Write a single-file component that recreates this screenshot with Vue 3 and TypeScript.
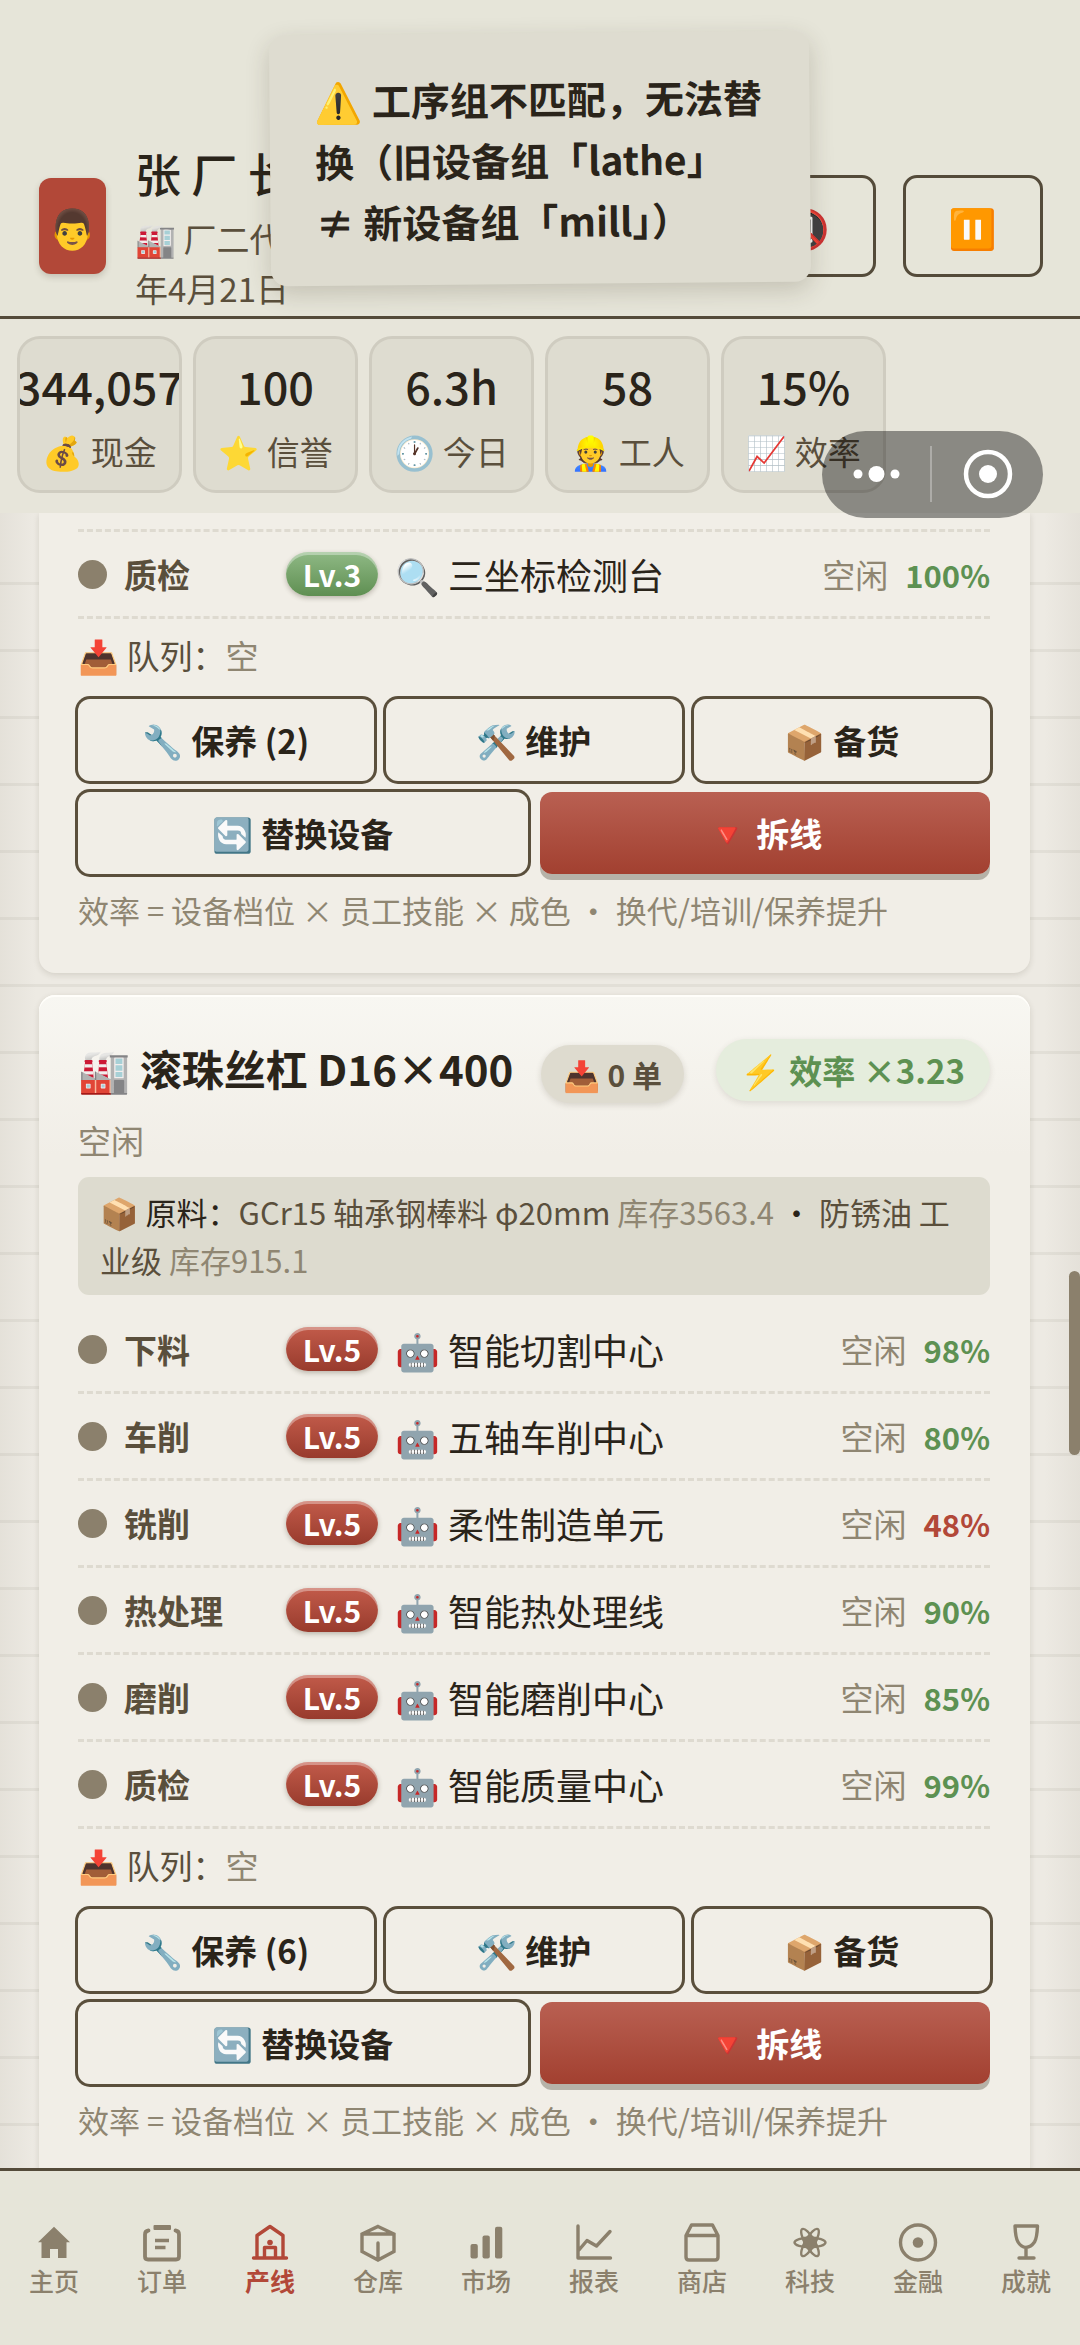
<script setup lang="ts">
interface Stat { value: string; icon: string; label: string }
interface Step { name: string; level: number; icon: string; machine: string; pct: number }
interface Material { name: string; stock: string }
interface Line {
  id: string
  partial: boolean
  title?: string
  orders?: number
  multiplier?: string
  materials?: Material[]
  steps: Step[]
  service: number
}

const stats: Stat[] = [
  { value: '344,057', icon: '💰', label: '现金' },
  { value: '100', icon: '⭐', label: '信誉' },
  { value: '6.3h', icon: '🕐', label: '今日' },
  { value: '58', icon: '👷', label: '工人' },
  { value: '15%', icon: '📈', label: '效率' },
]

const lines: Line[] = [
  {
    id: 'a',
    partial: true,
    steps: [{ name: '质检', level: 3, icon: '🔍', machine: '三坐标检测台', pct: 100 }],
    service: 2,
  },
  {
    id: 'b',
    partial: false,
    title: '滚珠丝杠 D16×400',
    orders: 0,
    multiplier: '3.23',
    materials: [
      { name: 'GCr15 轴承钢棒料 φ20mm', stock: '3563.4' },
      { name: '防锈油 工业级', stock: '915.1' },
    ],
    steps: [
      { name: '下料', level: 5, icon: '🤖', machine: '智能切割中心', pct: 98 },
      { name: '车削', level: 5, icon: '🤖', machine: '五轴车削中心', pct: 80 },
      { name: '铣削', level: 5, icon: '🤖', machine: '柔性制造单元', pct: 48 },
      { name: '热处理', level: 5, icon: '🤖', machine: '智能热处理线', pct: 90 },
      { name: '磨削', level: 5, icon: '🤖', machine: '智能磨削中心', pct: 85 },
      { name: '质检', level: 5, icon: '🤖', machine: '智能质量中心', pct: 99 },
    ],
    service: 6,
  },
]

const tabs = ['主页', '订单', '产线', '仓库', '市场', '报表', '商店', '科技', '金融', '成就']
const activeTab = '产线'
</script>

<template>
  <div class="app">
    <header class="top">
      <div class="avatar">👨</div>
      <div class="who">
        <h1 class="name">张 厂 长</h1>
        <p class="sub">🏭 厂二代<br />年4月21日</p>
      </div>
      <button class="icon-btn" type="button" aria-label="静音">📵</button>
      <button class="icon-btn" type="button" aria-label="暂停">⏸️</button>
    </header>

    <section class="stats">
      <div v-for="s in stats" :key="s.label" class="stat">
        <span class="stat-value">{{ s.value }}</span>
        <span class="stat-label">{{ s.icon }} {{ s.label }}</span>
      </div>
    </section>

    <main class="main">
      <article v-for="l in lines" :key="l.id" class="card" :class="{ partial: l.partial }">
        <template v-if="l.title">
          <div class="head">
            <h2 class="title">🏭 {{ l.title }}</h2>
            <span class="pill orders">📥 {{ l.orders }} 单</span>
            <span class="pill eff">⚡ 效率 ×{{ l.multiplier }}</span>
          </div>
          <p class="status">空闲</p>
          <p class="materials">📦 原料：<template v-for="(m, i) in l.materials" :key="m.name"><template v-if="i > 0"> · </template><span class="mat">{{ m.name }}</span> <span class="stock">库存{{ m.stock }}</span></template></p>
        </template>

        <ul class="steps">
          <li v-for="s in l.steps" :key="s.name" class="step">
            <i class="dot"></i>
            <span class="step-name">{{ s.name }}</span>
            <span class="level" :class="'lv' + s.level">Lv.{{ s.level }}</span>
            <span class="machine">{{ s.icon }} {{ s.machine }}</span>
            <span class="state">空闲</span>
            <span class="pct" :class="{ low: s.pct < 60 }">{{ s.pct }}%</span>
          </li>
        </ul>

        <p class="queue">📥 队列：<span class="muted">空</span></p>
        <div class="actions">
          <button class="btn" type="button">🔧 保养 ({{ l.service }})</button>
          <button class="btn" type="button">🛠️ 维护</button>
          <button class="btn" type="button">📦 备货</button>
        </div>
        <div class="actions">
          <button class="btn" type="button">🔄 替换设备</button>
          <button class="btn danger" type="button">🔻 拆线</button>
        </div>
        <p class="hint">效率 = 设备档位 × 员工技能 × 成色 · 换代/培训/保养提升</p>
      </article>
      <div class="scrollbar"></div>
    </main>

    <nav class="tabs">
      <a v-for="t in tabs" :key="t" href="#" class="tab" :class="{ active: t === activeTab }">
        <svg class="tab-icon" viewBox="0 0 40 40" fill="none" stroke="currentColor" stroke-width="3.4" stroke-linecap="round" stroke-linejoin="round" aria-hidden="true">
          <path v-if="t === '主页'" d="M20 3.7 36 19.3H32.5V35H24V26H16V35H7.5V19.3H4Z" fill="currentColor" stroke="none" />
          <g v-else-if="t === '订单'">
            <path d="M6.5 7.5Q3 8 3 11.5V33.5Q3 36.5 6 36.5H34Q37 36.5 37 33.5V11.5Q37 8 33.5 7.5" stroke-width="3.8" />
            <rect x="11.5" y="2" width="17.5" height="5" rx="1" fill="currentColor" stroke="none" />
            <path d="M13 17.5H27M13 24.5H23.5" stroke-linecap="butt" />
          </g>
          <g v-else-if="t === '产线'">
            <path d="M7 34V12.5L20 3.5 33 12.5V34M3.5 35H36.5M14.5 35V24.5H25.5V35" />
            <circle cx="20" cy="19.5" r="2.8" fill="currentColor" stroke="none" />
          </g>
          <path v-else-if="t === '仓库'" d="M20 3.5 36 11V28.5L20 37 4 28.5V11ZM4.5 11H35.5M20 20V36" stroke-linejoin="miter" />
          <g v-else-if="t === '市场'" fill="currentColor" stroke="none">
            <rect x="4.5" y="21" width="7.3" height="14.5" rx="2" />
            <rect x="16.5" y="12.5" width="7.3" height="23" rx="2" />
            <rect x="29" y="3.7" width="7.3" height="31.8" rx="2" />
          </g>
          <path v-else-if="t === '报表'" d="M4 3V35H36.5M4.5 27.5 13 17.5 22.5 23 36 8.5" />
          <path v-else-if="t === '商店'" d="M4 12.5V34Q4 37 7 37H33Q36 37 36 34V12.5L30.5 2H9.5ZM4 12.5H36" />
          <g v-else-if="t === '科技'" stroke-width="2.4">
            <ellipse cx="20" cy="19.5" rx="15.5" ry="4.8" />
            <ellipse cx="20" cy="19.5" rx="15.5" ry="4.8" transform="rotate(60 20 19.5)" />
            <ellipse cx="20" cy="19.5" rx="15.5" ry="4.8" transform="rotate(120 20 19.5)" />
            <circle cx="20" cy="19.5" r="7" fill="currentColor" stroke="none" />
          </g>
          <g v-else-if="t === '金融'">
            <circle cx="20" cy="19.5" r="17.5" />
            <circle cx="20" cy="19.5" r="5.3" fill="currentColor" stroke="none" />
          </g>
          <path v-else d="M9 3H31.5Q31 15 28.5 19 25 24 20 24.5 15 24 12 19 9.5 15 9 3ZM20 25V34M13 35H28" />
        </svg>
        <span class="tab-label">{{ t }}</span>
      </a>
    </nav>

    <div class="capsule">
      <svg viewBox="0 0 221 87" aria-hidden="true">
        <g fill="#fff">
          <circle cx="36" cy="43" r="4.5" />
          <circle cx="54.5" cy="43" r="8" />
          <circle cx="73" cy="43" r="4.5" />
          <circle cx="166" cy="43" r="9" />
        </g>
        <circle cx="166" cy="43" r="22" fill="none" stroke="#fff" stroke-width="4.5" />
        <path d="M109 15V71" stroke="#fff" stroke-opacity=".3" stroke-width="2" />
      </svg>
    </div>

    <div class="toast" role="alert">⚠️ 工序组不匹配，无法替换（旧设备组「lathe」 ≠ 新设备组「mill」）</div>
  </div>
</template>

<style>
body {
  margin: 0;
}
</style>

<style scoped>
* {
  box-sizing: border-box;
}

.app {
  position: relative;
  display: flex;
  flex-direction: column;
  height: 100vh;
  overflow: hidden;
  background: #edeae3;
  color: #2a241a;
  font-family: "Noto Sans CJK SC", "Noto Color Emoji", sans-serif;
  font-size: 33px;
}

h1,
h2,
p,
ul {
  margin: 0;
  padding: 0;
}

button {
  font-family: inherit;
  color: inherit;
}

.top {
  display: flex;
  align-items: center;
  height: 319px;
  padding: 135px 37px 0 39px;
  background: #e6e5d9;
  border-bottom: 3px solid #544b3a;
}

.avatar {
  display: flex;
  align-items: center;
  justify-content: center;
  width: 67px;
  height: 96px;
  border-radius: 12px;
  background: #b24838;
  box-shadow: 0 3px 6px rgba(60, 50, 30, 0.2);
  font-size: 39px;
}

.who {
  flex: 1;
  margin-left: 29px;
}

.name {
  font-size: 46px;
  line-height: 66px;
  font-weight: 500;
}

.sub {
  margin-top: 8px;
  color: #5a4f3c;
  line-height: 50px;
}

.icon-btn {
  width: 140px;
  height: 102px;
  margin-left: 27px;
  padding: 0;
  border: 3px solid #544b3a;
  border-radius: 14px;
  background: transparent;
  font-size: 39px;
}

.stats {
  display: flex;
  gap: 11px;
  padding: 17px 17px 20px;
  background: #e7e5da;
}

.stat {
  display: flex;
  flex-direction: column;
  align-items: center;
  gap: 4px;
  width: 165px;
  height: 157px;
  padding-top: 16px;
  overflow: hidden;
  border: 3px solid #cfccc0;
  border-radius: 23px;
  background: #dedcd0;
}

.stat-value {
  font-size: 45px;
  line-height: 62px;
  font-weight: 500;
  white-space: nowrap;
}

.stat-label {
  color: #5a4f3c;
  line-height: 60px;
  white-space: nowrap;
}

.main {
  position: relative;
  flex: 1;
  display: flex;
  flex-direction: column;
  gap: 22px;
  min-height: 0;
  overflow: hidden;
  padding: 0 50px 0 39px;
  background:
    linear-gradient(90deg, rgba(90, 80, 60, 0.06), transparent 36px calc(100% - 36px), rgba(90, 80, 60, 0.06)),
    repeating-linear-gradient(180deg, transparent 0 64px, #e2dfd7 64px 67px) 0 5px,
    #edeae3;
}

.card {
  flex: none;
  padding: 39px 40px 38px 39px;
  border-radius: 16px;
  background: linear-gradient(180deg, #f8f7f2, #f1eee7 160px);
  box-shadow: 0 2px 6px rgba(60, 50, 30, 0.14), inset 0 2px 0 #fffefa;
}

.card.partial {
  padding-top: 16px;
  border-radius: 0 0 16px 16px;
  background: #f1eee7;
  box-shadow: 0 2px 6px rgba(60, 50, 30, 0.14);
}

.head {
  display: flex;
  align-items: center;
  height: 68px;
}

.title {
  font-size: 42px;
  line-height: 66px;
  font-weight: 700;
  white-space: nowrap;
}

.pill {
  flex: none;
  border-radius: 32px;
  font-weight: 700;
  white-space: nowrap;
}

.orders {
  margin: 12px 0 0 28px;
  padding: 0 22px;
  background: #dedbcf;
  color: #5a4f3c;
  font-size: 30px;
  line-height: 58px;
  box-shadow: 0 2px 6px rgba(60, 50, 30, 0.16);
}

.eff {
  margin: 4px 0 0 auto;
  padding: 0 25px;
  background: #e5eddd;
  color: #5d9152;
  line-height: 62px;
  box-shadow: 0 2px 6px rgba(60, 50, 30, 0.12);
}

.status {
  margin: 12px 0 11px;
  color: #8f8672;
  line-height: 52px;
}

.materials {
  margin-bottom: 12px;
  padding: 11px 22px;
  border-radius: 11px;
  background: #dddbcf;
  font-size: 31px;
  line-height: 48px;
}

.mat {
  color: #5a4f3c;
}

.stock,
.muted {
  color: #8f8672;
}

.steps {
  list-style: none;
}

.partial .steps {
  border-top: 3px dashed #dedad0;
}

.step {
  display: flex;
  align-items: center;
  gap: 17px;
  height: 87px;
  border-bottom: 3px dashed #dedad0;
}

.dot {
  width: 29px;
  height: 29px;
  border-radius: 50%;
  background: #8b806c;
}

.step-name {
  width: 145px;
  color: #5a4f3c;
  font-weight: 700;
}

.level {
  width: 92px;
  border-radius: 22px;
  color: #fff;
  font-size: 30px;
  font-weight: 700;
  line-height: 44px;
  text-align: center;
  box-shadow: 0 2px 5px rgba(60, 50, 30, 0.3), inset 0 3px 0 rgba(255, 255, 255, 0.35);
}

.lv3 {
  background: linear-gradient(180deg, #8fb985, #5f8f52);
}

.lv5 {
  background: linear-gradient(180deg, #c25b4a, #983b2d);
}

.machine {
  flex: 1;
  font-size: 36px;
  white-space: nowrap;
}

.state {
  color: #8f8672;
}

.pct {
  color: #5d9152;
  font-size: 31px;
  font-weight: 700;
}

.pct.low {
  color: #b24838;
}

.queue {
  margin-bottom: 7px;
  color: #5a4f3c;
  line-height: 73px;
}

.actions {
  display: flex;
  gap: 12px;
  margin-bottom: 11px;
}

.btn {
  flex: 1 1 0;
  height: 82px;
  padding: 0;
  border: 0;
  border-radius: 12px;
  background: transparent;
  box-shadow: 0 0 0 3px #5a4f3c;
  font-size: 33px;
  font-weight: 700;
}

.danger {
  background: linear-gradient(180deg, #b96052, #a24030);
  color: #fff;
  box-shadow: 0 6px 0 #b6b2a8;
}

.hint {
  color: #8f8672;
  font-size: 31px;
  line-height: 50px;
  white-space: nowrap;
}

.scrollbar {
  position: absolute;
  top: 758px;
  right: 0;
  width: 11px;
  height: 184px;
  border-radius: 6px;
  background: #8b806c;
}

.tabs {
  display: flex;
  height: 177px;
  padding-top: 52px;
  border-top: 3px solid #544b3a;
  background: #e6e5d9;
}

.tab {
  flex: 1 1 0;
  display: flex;
  flex-direction: column;
  align-items: center;
  color: #8b806c;
  text-decoration: none;
}

.tab-icon {
  width: 40px;
  height: 40px;
}

.tab-label {
  font-size: 25px;
  line-height: 34px;
  font-weight: 500;
}

.tab.active {
  color: #b24838;
}

.active .tab-label {
  font-weight: 700;
}

.capsule {
  position: absolute;
  top: 431px;
  right: 37px;
  width: 221px;
  height: 87px;
  border-radius: 44px;
  background: rgba(0, 0, 0, 0.4);
}

.capsule svg {
  display: block;
  width: 100%;
  height: 100%;
}

.toast {
  position: absolute;
  top: 33px;
  left: 50%;
  width: 50%;
  padding: 35px 45px 33px;
  transform: translateX(-50%) rotate(-0.5deg);
  border-radius: 16px;
  background: #dedcd0;
  box-shadow: 0 8px 24px rgba(60, 50, 30, 0.2);
  font-size: 39px;
  font-weight: 700;
  line-height: 61px;
}
</style>
